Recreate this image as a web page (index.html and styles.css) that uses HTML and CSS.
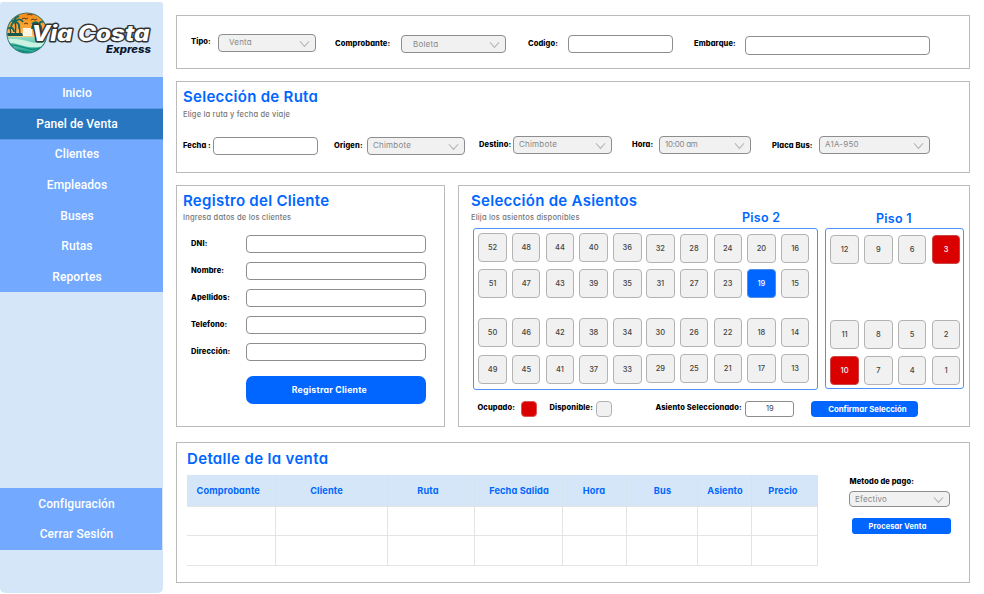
FILE: index.html
```html
<!DOCTYPE html>
<html lang="es">
<head>
<meta charset="utf-8">
<title>Via Costa Express - Panel de Venta</title>
<link rel="stylesheet" href="styles.css">
</head>
<body>
<svg class="defs" width="0" height="0"><symbol id="chev" viewBox="0 0 12 8"><path d="M1 1l5 5.6L11 1" fill="none" stroke="#b5b5b5" stroke-width="1.2"/></symbol></svg>
<aside class="sidebar">
  <svg class="logo" width="163" height="75" viewBox="0 2 163 75">
    <defs>
      <clipPath id="disc"><circle cx="27" cy="33" r="19.7"/></clipPath>
      <linearGradient id="sky" x1="0" y1="0" x2="0" y2="1"><stop offset="0" stop-color="#f28a12"/><stop offset=".6" stop-color="#fba63a"/><stop offset="1" stop-color="#fdd08a"/></linearGradient>
      <linearGradient id="sea" x1="0" y1="0" x2="0" y2="1"><stop offset="0" stop-color="#8fdcc4"/><stop offset="1" stop-color="#129a8b"/></linearGradient>
    </defs>
    <circle cx="27" cy="33" r="20.6" fill="#2c6f70"/>
    <g clip-path="url(#disc)">
      <rect x="6" y="12" width="42" height="26" fill="url(#sky)"/>
      <path d="M23 28h9v8h-9z" fill="#fdf6e2"/>
      <path d="M6 37h42v18H6z" fill="url(#sea)"/>
      <path d="M6 39c10-1 17 1 25 3 7 2 12 1 17-1v3c-8 4-17 4-24 2S12 42 6 43z" fill="#c9f2e2"/>
      <path d="M8 45c9-1 14 3 22 4s11-1 15-4M12 50c6-1 10 2 17 2" fill="none" stroke="#0c8a7d" stroke-width="1.4"/>
      <path d="M15 36c1-6 1-10 0-14M20 36c0-5 0-7-1-10M10 36c1-3 1-5 0-8" fill="none" stroke="#3f4a2a" stroke-width="1.3"/>
      <path d="M15 22c-3-3-6-1-7 3M15 22c-3 0-4 4-4 7M15 22c3-4 6-3 8 0M15 22c3 0 5 3 4 7M15 22c-1-3 1-5 4-6M10 28c-2-1-4 1-4 4M10 28c2-1 4 1 4 4M39 24c2-4 6-3 8 1M39 24c-4-2-7 1-7 5M39 24c2 2 3 5 2 8M39 24c-3-3-5-2-7 0" fill="none" stroke="#126a60" stroke-width="1.9"/>
      <path d="M22 19l2-1 2 1 2-1M27 15l2-1 2 1 2-1M31 20l2-1 2 1 2-1M24 24l2-1 2 1" fill="none" stroke="#5a3b19" stroke-width="1"/>
      <path d="M6 33h16l1 3H6z" fill="#17594e"/>
    </g>
    <text class="logo-main" x="31.5" y="40.5" textLength="118" lengthAdjust="spacingAndGlyphs">Via Costa</text>
    <text class="logo-sub" x="106" y="53" textLength="45" lengthAdjust="spacingAndGlyphs">Express</text>
  </svg>
  <nav class="nav">
    <a>Inicio</a>
    <a class="active">Panel de Venta</a>
    <a>Clientes</a>
    <a>Empleados</a>
    <a>Buses</a>
    <a>Rutas</a>
    <a>Reportes</a>
  </nav>
  <nav class="nav nav-bottom">
    <a>Configuración</a>
    <a>Cerrar Sesión</a>
  </nav>
</aside>
<main class="main">
  <section class="panel doc">
    <div class="field f-tipo"><label>Tipo:</label><div class="select">Venta<svg><use href="#chev"/></svg></div></div>
    <div class="field f-comp"><label>Comprobante:</label><div class="select">Boleta<svg><use href="#chev"/></svg></div></div>
    <div class="field f-cod"><label>Codigo:</label><div class="input"></div></div>
    <div class="field f-emb"><label>Embarque:</label><div class="input"></div></div>
  </section>
  <section class="panel route">
    <h2>Selección de Ruta</h2>
    <p>Elige la ruta y fecha de viaje</p>
    <div class="route-row">
      <div class="field r-fecha"><label>Fecha :</label><div class="input"></div></div>
      <div class="field r-origen"><label>Origen:</label><div class="select">Chimbote<svg><use href="#chev"/></svg></div></div>
      <div class="field r-destino"><label>Destino:</label><div class="select">Chimbote<svg><use href="#chev"/></svg></div></div>
      <div class="field r-hora"><label>Hora:</label><div class="select">10:00 am<svg><use href="#chev"/></svg></div></div>
      <div class="field r-placa"><label>Placa Bus:</label><div class="select">A1A-950<svg><use href="#chev"/></svg></div></div>
    </div>
  </section>
  <div class="middle">
    <section class="panel client">
      <h2>Registro del Cliente</h2>
      <p>Ingresa datos de los clientes</p>
      <div class="form">
        <label>DNI:</label><div class="input"></div>
        <label>Nombre:</label><div class="input"></div>
        <label>Apellidos:</label><div class="input"></div>
        <label>Telefono:</label><div class="input"></div>
        <label>Dirección:</label><div class="input"></div>
      </div>
      <button class="btn register">Registrar Cliente</button>
    </section>
    <section class="panel seats">
      <div class="seats-head">
        <div><h2>Selección de Asientos</h2><p>Elija los asientos disponibles</p></div>
        <h3 class="piso2">Piso 2</h3>
        <h3 class="piso1">Piso 1</h3>
      </div>
      <div class="floors">
        <div class="floor floor2">
          <div class="block rear">
            <i>52</i><i>48</i><i>44</i><i>40</i><i>36</i>
            <i>51</i><i>47</i><i>43</i><i>39</i><i>35</i>
            <i>50</i><i>46</i><i>42</i><i>38</i><i>34</i>
            <i>49</i><i>45</i><i>41</i><i>37</i><i>33</i>
          </div>
          <div class="block front">
            <i>32</i><i>28</i><i>24</i><i>20</i><i>16</i>
            <i>31</i><i>27</i><i>23</i><i class="chosen">19</i><i>15</i>
            <i>30</i><i>26</i><i>22</i><i>18</i><i>14</i>
            <i>29</i><i>25</i><i>21</i><i>17</i><i>13</i>
          </div>
        </div>
        <div class="floor floor1">
          <div class="block">
            <i>12</i><i>9</i><i>6</i><i class="taken">3</i>
            <i>11</i><i>8</i><i>5</i><i>2</i>
            <i class="taken">10</i><i>7</i><i>4</i><i>1</i>
          </div>
        </div>
      </div>
      <div class="legend">
        <label class="l-ocu">Ocupado:</label><span class="key taken"></span>
        <label class="l-dis">Disponible:</label><span class="key"></span>
        <label class="l-sel">Asiento Seleccionado:</label><span class="picked">19</span>
        <button class="btn confirm">Confirmar Selección</button>
      </div>
    </section>
  </div>
  <section class="panel detail">
    <div class="sale">
      <h2>Detalle de la venta</h2>
      <table>
        <colgroup><col class="c1"><col class="c2"><col class="c3"><col class="c4"><col class="c5"><col class="c6"><col class="c7"><col class="c8"></colgroup>
        <thead><tr><th class="n5">Comprobante</th><th class="n9">Cliente</th><th class="n5">Ruta</th><th class="e2">Fecha Salida</th><th>Hora</th><th class="e2">Bus</th><th class="e2">Asiento</th><th class="n2">Precio</th></tr></thead>
        <tbody>
          <tr><td></td><td></td><td></td><td></td><td></td><td></td><td></td><td></td></tr>
          <tr><td></td><td></td><td></td><td></td><td></td><td></td><td></td><td></td></tr>
        </tbody>
      </table>
    </div>
    <div class="pay">
      <label>Metodo de pago:</label>
      <div class="select">Efectivo<svg><use href="#chev"/></svg></div>
      <button class="btn process">Procesar Venta</button>
    </div>
  </section>
</main>
</body>
</html>
```
FILE: styles.css
```css
* { box-sizing: border-box; }
body {
  margin: 0; width: 984px; height: 594px; overflow: hidden; background: #fff;
  display: flex; font-family: Inter, "Liberation Sans", sans-serif;
  font-feature-settings: "cv11", "ss03"; color: #000;
}
.defs { position: absolute; }
h2, h3, p { margin: 0; }

/* Sidebar */
.sidebar { width: 163px; height: 591px; margin-top: 2px; background: #d4e6f7; border-radius: 3px 3px 5px 5px; display: flex; flex-direction: column; flex: none; }
.logo { display: block; flex: none; }
.logo-main { font: italic 800 21px Inter, sans-serif; fill: #fff; stroke: #333; stroke-width: 2.8px; paint-order: stroke; stroke-linejoin: round; font-feature-settings: "cv11"; }
.logo-sub { font: italic 800 10px Inter, sans-serif; fill: #0b1730; font-feature-settings: "cv11"; }
.nav { background: #73aaff; height: 215px; font: 500 12px/30.6px Roboto, sans-serif; letter-spacing: .08px; color: #fff; text-align: center; }
.nav a { display: block; padding: 1px 9px 0 0; height: 30.6px; }
.nav a.active { background: #2876c0; height: 32px; line-height: 28px; border: solid #5b97e8; border-width: 1px 0; margin-bottom: -1.2px; }
.nav-bottom { margin-top: 196px; width: 162px; height: 62px; padding-top: 1px; line-height: 30px; }
.nav-bottom a { height: 30px; padding-top: 0; }

/* Panels */
.main { width: 794px; margin: 15px 0 0 13px; display: flex; flex-direction: column; }
.panel { border: 1px solid #bbb; background: #fff; }
h2 { color: #0066ff; font-size: 15px; line-height: 18px; font-weight: 600; letter-spacing: .28px; white-space: nowrap; }
p { color: #777; font-size: 7.5px; line-height: 10px; font-weight: 500; letter-spacing: .19px; white-space: nowrap; }
label { font-size: 7.5px; line-height: 10px; font-weight: 800; letter-spacing: .12px; white-space: nowrap; }
.input, .select { border: 1px solid #8d8d8d; border-radius: 4px; height: 18px; background: #fff; flex: none; }
.select { background: #f1f1f1; color: #888; font-size: 8px; line-height: 15px; letter-spacing: .2px; display: flex; justify-content: space-between; padding: 0 5px 0 5px; white-space: nowrap; }
.select svg { width: 11px; height: 8px; margin-top: 5px; }
.field { display: flex; align-items: flex-start; flex: none; }
.field label { flex: none; }

.doc { height: 54px; display: flex; padding-left: 14px; }
.f-tipo { width: 144px; padding-top: 18px; }
.f-tipo label { width: 27px; margin-top: 3px; }
.f-tipo .select { width: 98px; padding-left: 10px; }
.f-comp { width: 193px; padding-top: 19px; }
.f-comp label { width: 66px; margin-top: 4px; }
.f-comp .select { width: 105px; padding-left: 11px; line-height: 16px; }
.f-cod { width: 166px; padding-top: 19px; }
.f-cod label { width: 40px; margin-top: 4px; }
.f-cod .input { width: 105px; }
.f-emb { padding-top: 20px; }
.f-emb label { width: 51px; margin-top: 3px; }
.f-emb .input { width: 185px; height: 18.5px; }

.route { height: 92px; margin-top: 12px; padding: 6px 0 0 6px; }
.route p { margin-top: 4px; }
.route-row { display: flex; margin-top: 16px; }
.r-fecha { width: 151px; }
.r-fecha .input { margin-top: 1px; width: 105px; }
.r-fecha label { width: 30px; margin-top: 5px; }
.r-origen { width: 145px; }
.r-origen .select { margin-top: 1px; width: 98px; }
.r-origen label { width: 33px; margin-top: 5px; }
.r-destino { width: 153px; }
.r-destino .select { width: 99px; }
.r-destino label { width: 34px; margin-top: 4px; }
.r-hora { width: 140px; }
.r-hora .select { width: 92px; letter-spacing: -.3px; }
.r-hora label { width: 27px; margin-top: 4px; }
.r-placa .select { width: 111px; }
.r-placa label { width: 47px; margin-top: 5px; }

.middle { display: flex; gap: 13px; margin-top: 12px; }
.client { width: 269px; height: 242px; padding: 6px 0 0 6px; }
.client p { margin-top: 3px; }
.form { display: grid; grid-template-columns: 55.4px 180px; grid-auto-rows: 27px; margin: 12px 0 0 8px; }
.form label { margin-top: 4px; }
.btn { display: block; border: 0; padding: 0; background: #0066ff; color: #fff; font-family: inherit; font-feature-settings: inherit; font-weight: 700; white-space: nowrap; text-align: center; }
.register { width: 180px; height: 28px; border-radius: 7px; margin: 6px 0 0 63.4px; font-size: 8.7px; letter-spacing: .25px; padding-right: 14px; }

.seats { width: 512px; height: 242px; padding: 6px 0 0 12px; }
.seats-head { display: flex; height: 36px; }
.seats-head > div { width: 271px; }
.seats-head p { margin-top: 3px; }
h3 { color: #0066ff; font-size: 12.5px; font-weight: 600; line-height: 16px; letter-spacing: .25px; white-space: nowrap; margin-top: 18px; }
.piso2 { width: 134px; }
.piso1 { padding-top: 1px; }
.floors { display: flex; gap: 7px; margin-left: 2px; }
.floor { border: 1px solid #4c92fb; border-radius: 3px; height: 162px; display: flex; }
.floor2 { width: 345px; padding-left: 4.4px; }
.floor1 { width: 139px; padding-left: 4.4px; height: 161px; }
.block { display: grid; grid-template-columns: repeat(5, 28px); column-gap: 5.7px; }
.rear { grid-template-rows: 36px 49px 37px 28px; padding-top: 4px; margin-right: 5px; }
.front { grid-template-rows: 35px 49px 36px 28px; padding-top: 5px; }
.floor1 .block { grid-template-columns: repeat(4, 28px); column-gap: 5.8px; grid-template-rows: 85px 36px 28px; padding-top: 6px; }
.block i { width: 28.4px; height: 28.5px; border: 1px solid #b3b3b3; border-radius: 4px; background: #f1f1f1; color: #444; font-style: normal; font-size: 7.5px; font-weight: 500; line-height: 27px; text-align: center; }
.block i.chosen { background: #0066ff; color: #fff; border-color: #4d8fe6; }
.block i.taken { background: #db0000; color: #fff; border-color: #c44; }
.legend { display: flex; margin: 11px 0 0 6.4px; height: 17px; align-items: flex-start; }
.legend label { margin-top: 2px; }
.key { width: 16px; height: 16px; border: 1px solid #b3b3b3; border-radius: 4px; background: #f1f1f1; }
.key.taken { background: #db0000; border-color: #d55; }
.l-ocu { width: 44px; }
.l-dis { width: 47px; margin-left: 12px; }
.l-sel { width: 90px; margin-left: 43px; }
.picked { width: 49px; height: 16px; border: 1px solid #8d8d8d; border-radius: 3px; font-size: 7.5px; line-height: 14px; text-align: center; color: #444; }
.confirm { width: 107px; height: 16px; margin-left: 17px; border-radius: 4px; font-size: 7.8px; padding-left: 5px; }

.detail { height: 141px; margin-top: 15px; padding: 7px 0 0 10px; display: flex; }
.detail h2 { letter-spacing: .34px; }
.sale { width: 631px; }
table { border-collapse: collapse; table-layout: fixed; width: 630px; margin-top: 7px; }
.c1 { width: 88px; } .c2 { width: 112px; } .c3 { width: 87px; } .c4 { width: 88px; }
.c5 { width: 64px; } .c6 { width: 71px; } .c7 { width: 54px; } .c8 { width: 66px; }
th { height: 31px; padding: 0; background: #d4e6f7; color: #0066ff; font-size: 9.2px; font-weight: 700; letter-spacing: .14px; border: 1px solid #d6e2ee; border-width: 0 1px; white-space: nowrap; }
th:first-child, td:first-child { border-left: 0; }
.n5 { padding-right: 5px; } .n9 { padding-right: 9px; } .n2 { padding-right: 2px; } .e2 { padding-left: 2px; }
td { height: 29.5px; padding: 0; border: 1px solid #e4e4e4; }
.pay { margin: 27px 0 0 31px; width: 102px; }
.pay label { display: block; height: 14px; margin-left: .5px; }
.pay .select { width: 101px; height: 16px; line-height: 15px; }
.pay .select svg { margin-top: 4px; }
.process { width: 99px; height: 16px; border-radius: 3px; margin: 11px 0 0 3px; font-size: 7.4px; letter-spacing: .15px; padding-right: 8px; }
```
